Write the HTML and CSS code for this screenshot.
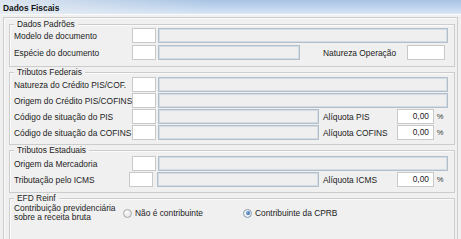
FILE: index.html
```html
<!DOCTYPE html>
<html lang="pt-BR">
<head>
<meta charset="utf-8">
<title>Dados Fiscais</title>
<link rel="stylesheet" href="styles.css">
</head>
<body>
<div class="title">Dados Fiscais</div>
<div class="frame">
  <fieldset class="group g1">
    <legend>Dados Padrões</legend>
    <div class="rows">
      <div class="row">
        <span class="lbl">Modelo de documento</span>
        <span class="code"></span>
        <span class="desc grow"></span>
      </div>
      <div class="row">
        <span class="lbl">Espécie do documento</span>
        <span class="code"></span>
        <span class="desc w142"></span>
        <span class="lbl-nat">Natureza Operação</span>
        <span class="code nat-in"></span>
      </div>
    </div>
  </fieldset>

  <fieldset class="group g2">
    <legend>Tributos Federais</legend>
    <div class="rows">
      <div class="row">
        <span class="lbl">Natureza do Crédito PIS/COF.</span>
        <span class="code"></span>
        <span class="desc grow"></span>
      </div>
      <div class="row">
        <span class="lbl">Origem do Crédito PIS/COFINS</span>
        <span class="code"></span>
        <span class="desc grow"></span>
      </div>
      <div class="row">
        <span class="lbl">Código de situação do PIS</span>
        <span class="code"></span>
        <span class="desc w161"></span>
        <span class="lbl-aliq">Alíquota PIS</span>
        <span class="num">0,00</span>
        <span class="pct">%</span>
      </div>
      <div class="row">
        <span class="lbl">Código de situação da COFINS</span>
        <span class="code"></span>
        <span class="desc w161"></span>
        <span class="lbl-aliq">Alíquota COFINS</span>
        <span class="num">0,00</span>
        <span class="pct">%</span>
      </div>
    </div>
  </fieldset>

  <fieldset class="group g3">
    <legend>Tributos Estaduais</legend>
    <div class="rows">
      <div class="row">
        <span class="lbl">Origem da Mercadoria</span>
        <span class="code"></span>
        <span class="desc grow"></span>
      </div>
      <div class="row">
        <span class="lbl lbl-short">Tributação pelo ICMS</span>
        <span class="code"></span>
        <span class="desc w162"></span>
        <span class="lbl-aliq">Alíquota ICMS</span>
        <span class="num">0,00</span>
        <span class="pct">%</span>
      </div>
    </div>
  </fieldset>

  <fieldset class="group g4">
    <legend>EFD Reinf</legend>
    <div class="radio-row">
      <span class="lbl-multi">Contribuição previdenciária<br>sobre a receita bruta</span>
      <label class="opt"><span class="rb"></span><span>Não é contribuinte</span></label>
      <label class="opt"><span class="rb on"></span><span>Contribuinte da CPRB</span></label>
    </div>
  </fieldset>
</div>
</body>
</html>
```

FILE: styles.css
```css
* { box-sizing: border-box; }

html, body {
  margin: 0;
  padding: 0;
}

body {
  width: 461px;
  height: 239px;
  overflow: hidden;
  background: #f0f0f0;
  font-family: "Liberation Sans", Arial, sans-serif;
  font-size: 8.4px;
  color: #1c1c1c;
}

.title {
  height: 15px;
  padding: 1px 0 0 3px;
  line-height: 14px;
  font-weight: bold;
  color: #111;
  border-bottom: 1px solid #fbfbfb;
  background:
    linear-gradient(90deg, rgba(236, 239, 243, 0.75) 0%, rgba(236, 239, 243, 0) 45%),
    linear-gradient(180deg, #a9c4e4 0%, #c3d7ee 60%, #d9e6f4 100%);
}

.frame {
  display: flex;
  flex-direction: column;
  margin: 2px 3px 0 3px;
  height: 222px;
  border: 1px solid #cdcdcd;
  border-bottom: none;
  box-shadow: inset 1px 1px 0 #fafafa;
  padding: 1px 2px 0 5px;
}

.group {
  flex: none;
  margin: 0;
  min-width: 0;
  border: 1px solid #cccccc;
  box-shadow: inset 1px 1px 0 #fbfbfb;
  padding: 0 6px 6px 4px;
}

.group legend {
  padding: 0 3px;
  line-height: 10px;
  background: #f0f0f0;
}

.rows {
  display: flex;
  flex-direction: column;
}

.g1 .rows { margin-top: -1px; gap: 2px; }
.g2 .rows { gap: 1px; }
.g2 { padding-bottom: 4px; }
.g3 .rows { margin-top: 1px; gap: 1px; }
.g3 { padding-bottom: 5px; }
.g4 {
  flex: 1;
  border-bottom: none;
  padding-bottom: 0;
}

.row {
  display: flex;
  align-items: center;
  height: 15px;
}

.lbl {
  width: 118px;
  flex: none;
  white-space: nowrap;
}

.lbl-short { width: 115px; }

.code {
  flex: none;
  width: 24px;
  height: 15px;
  background: #fff;
  border: 1px solid #c9c9c9;
}

.desc {
  flex: none;
  height: 15px;
  margin-left: 2px;
  background: #efefef;
  border: 1px solid #b4bfcc;
  box-shadow: inset 0 0 0 1px #d3dbe4;
}

.grow { flex: 1; }
.w142 { width: 142px; }
.w161 { width: 161px; }
.w162 { width: 162px; margin-left: 4px; }

.lbl-nat {
  margin-left: 23px;
  width: 84px;
  white-space: nowrap;
}

.nat-in { width: 38px; }

.lbl-aliq {
  margin-left: 4px;
  width: 74px;
  white-space: nowrap;
}

.num {
  width: 37px;
  height: 15px;
  background: #fff;
  border: 1px solid #c9c9c9;
  text-align: right;
  padding-right: 4px;
  line-height: 13px;
}

.pct {
  width: 12px;
  text-align: center;
  font-size: 7.5px;
  color: #333;
}

.radio-row {
  display: flex;
  align-items: center;
  margin-top: 1px;
}

.lbl-multi {
  width: 109px;
  line-height: 9px;
}

.opt {
  display: flex;
  align-items: center;
  gap: 3px;
  width: 120px;
  white-space: nowrap;
}

.rb {
  position: relative;
  flex: none;
  width: 9px;
  height: 9px;
  border-radius: 50%;
  border: 1px solid #aaa;
  background: radial-gradient(circle at 40% 35%, #fbfbfb, #d9d9d9);
}

.rb.on {
  border-color: #8a9bb0;
  background: radial-gradient(circle at 40% 35%, #fdfdfd, #dde3ea);
}

.rb.on::after {
  content: "";
  position: absolute;
  left: 1.5px;
  top: 1.5px;
  width: 4px;
  height: 4px;
  border-radius: 50%;
  background: radial-gradient(circle at 35% 35%, #7fb2e6, #1f4f8f);
}
```
